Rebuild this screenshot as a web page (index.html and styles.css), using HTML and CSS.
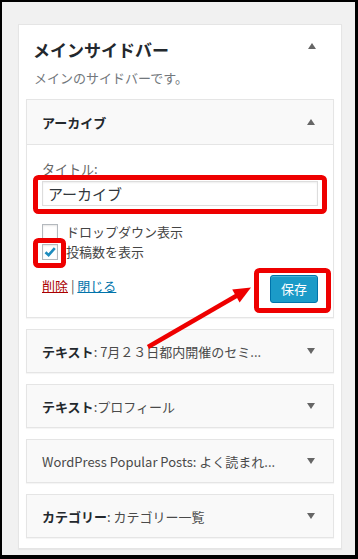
FILE: index.html
```html
<!DOCTYPE html>
<html lang="ja">
<head>
    <meta charset="UTF-8">
    <meta name="viewport" content="width=device-width, initial-scale=1.0">
    <title>ウィジェット</title>
    <link rel="stylesheet" href="styles.css">
</head>
<body>
    <div class="screen">
        <div class="sidebar">
            <div class="sidebar-head">
                <h2>メインサイドバー</h2>
                <span class="arrow up"></span>
            </div>
            <p class="desc">メインのサイドバーです。</p>

            <div class="widget open">
                <div class="widget-top">
                    <h3>アーカイブ</h3>
                    <span class="arrow up"></span>
                </div>
                <div class="widget-inside">
                    <label class="field-label">タイトル:</label>
                    <input class="field" type="text" value="アーカイブ">
                    <div class="check"><span class="box"></span>ドロップダウン表示</div>
                    <div class="check">
                        <span class="box">
                            <svg width="14" height="14" viewBox="0 0 14 14"><path d="M2.5 7.2 L5.6 10.2 L11.8 3.2" fill="none" stroke="#1e8cbe" stroke-width="2.6"/></svg>
                        </span>投稿数を表示
                    </div>
                    <div class="controls">
                        <div class="links"><a class="delete">削除</a> | <a class="close">閉じる</a></div>
                        <button class="save">保存</button>
                    </div>
                </div>
            </div>

            <div class="widget">
                <div class="widget-top">
                    <h3>テキスト<span class="in-title">: 7月２３日都内開催のセミ...</span></h3>
                    <span class="arrow down"></span>
                </div>
            </div>
            <div class="widget">
                <div class="widget-top">
                    <h3>テキスト<span class="in-title">:プロフィール</span></h3>
                    <span class="arrow down"></span>
                </div>
            </div>
            <div class="widget">
                <div class="widget-top">
                    <h3 class="light">WordPress Popular Posts: よく読まれ...</h3>
                    <span class="arrow down"></span>
                </div>
            </div>
            <div class="widget">
                <div class="widget-top">
                    <h3>カテゴリー<span class="in-title">: カテゴリー一覧</span></h3>
                    <span class="arrow down"></span>
                </div>
            </div>
        </div>
    </div>

    <!-- annotations drawn over the screenshot -->
    <svg class="marks" width="358" height="559" viewBox="0 0 358 559">
        <g fill="none" stroke="#ee0000" stroke-width="5">
            <rect x="35.5" y="177.5" width="289" height="34" rx="3"/>
            <rect x="35.5" y="240.5" width="28" height="25" rx="3"/>
            <rect x="256.5" y="270.5" width="72" height="40" rx="3"/>
        </g>
        <line x1="148" y1="347" x2="237" y2="295.5" stroke="#ee0000" stroke-width="4.5"/>
        <polygon points="251,287.5 239.6,302.5 232.2,289.5" fill="#ee0000"/>
    </svg>
</body>
</html>
```

FILE: styles.css
```css
body {
    margin: 0;
    width: 358px;
    height: 559px;
    background-color: #000;
    font-family: "Noto Sans CJK JP", "Noto Sans", sans-serif;
    color: #23282d;
    position: relative;
    overflow: hidden;
}

.screen {
    box-sizing: border-box;
    margin: 2px 3px 0 2px;
    height: 553px;
    background-color: #f1f1f1;
    padding: 22px 13px 0 16px;
}

.sidebar {
    background-color: #fff;
    border: 1px solid #e5e5e5;
    box-shadow: 0 1px 1px rgba(0, 0, 0, 0.04);
    padding: 0 7px 10px 7px;
}

.sidebar-head {
    display: flex;
    align-items: flex-start;
    justify-content: space-between;
    padding: 13px 18px 0 7px;
}

.sidebar-head h2 {
    margin: 0;
    font-size: 17px;
    line-height: 24px;
    font-weight: 700;
    color: #23282d;
}

.sidebar-head .arrow {
    margin-top: 5px;
}

.desc {
    margin: 7px 0 12px 8px;
    font-size: 13px;
    line-height: 18px;
    color: #72777c;
}

.arrow {
    width: 0;
    height: 0;
    border-left: 4px solid transparent;
    border-right: 4px solid transparent;
}

.arrow.up {
    border-bottom: 6px solid #666;
}

.arrow.down {
    border-top: 6px solid #666;
}

.widget {
    border: 1px solid #e5e5e5;
    background-color: #f9f9f9;
    box-shadow: 0 1px 1px rgba(0, 0, 0, 0.04);
    margin-bottom: 11px;
}

.widget:last-child {
    margin-bottom: 0;
}

.widget-top {
    height: 42px;
    display: flex;
    align-items: center;
    justify-content: space-between;
    padding: 0 18px 0 15px;
}

.widget.open .widget-top {
    height: 44px;
    border-bottom: 1px solid #e5e5e5;
}

.widget-top h3 {
    margin: 0;
    font-size: 13px;
    font-weight: 600;
    color: #23282d;
    white-space: nowrap;
}

.widget-top h3.light,
.in-title {
    font-weight: 400;
    color: #4a4a4a;
}

.widget-inside {
    background-color: #fff;
    padding: 15px 15px 14px 15px;
}

.field-label {
    display: block;
    font-size: 13px;
    line-height: 18px;
    color: #666;
}

.field {
    display: block;
    box-sizing: border-box;
    width: 100%;
    height: 25px;
    margin: 3px 0 16px 0;
    padding: 0 5px;
    border: 1px solid #ddd;
    box-shadow: inset 0 1px 2px rgba(0, 0, 0, 0.07);
    font-family: "Noto Sans CJK JP", sans-serif;
    font-size: 15px;
    color: #32373c;
    background-color: #fff;
}

.check {
    display: flex;
    align-items: center;
    height: 20px;
    font-size: 13px;
    line-height: 20px;
    color: #444;
}

.box {
    box-sizing: border-box;
    width: 16px;
    height: 16px;
    border: 1px solid #b4b9be;
    background-color: #fff;
    box-shadow: inset 0 1px 2px rgba(0, 0, 0, 0.1);
    margin-right: 8px;
    display: flex;
    align-items: center;
    justify-content: center;
}

.controls {
    display: flex;
    align-items: center;
    justify-content: space-between;
    margin-top: 13px;
}

.links {
    font-size: 13px;
    line-height: 18px;
    color: #555;
    margin-top: -6px;
}

.links a {
    text-decoration: underline;
}

.delete {
    color: #a00;
}

.close {
    color: #0073aa;
}

.save {
    display: block;
    width: 48px;
    height: 28px;
    padding: 0;
    border: 1px solid #0073aa;
    border-radius: 3px;
    background-color: #1b9bc8;
    box-shadow: inset 0 1px 0 rgba(120, 200, 230, 0.5);
    color: #fff;
    font-family: "Noto Sans CJK JP", sans-serif;
    font-size: 13px;
    line-height: 26px;
}

.marks {
    position: absolute;
    top: 0;
    left: 0;
}
```
